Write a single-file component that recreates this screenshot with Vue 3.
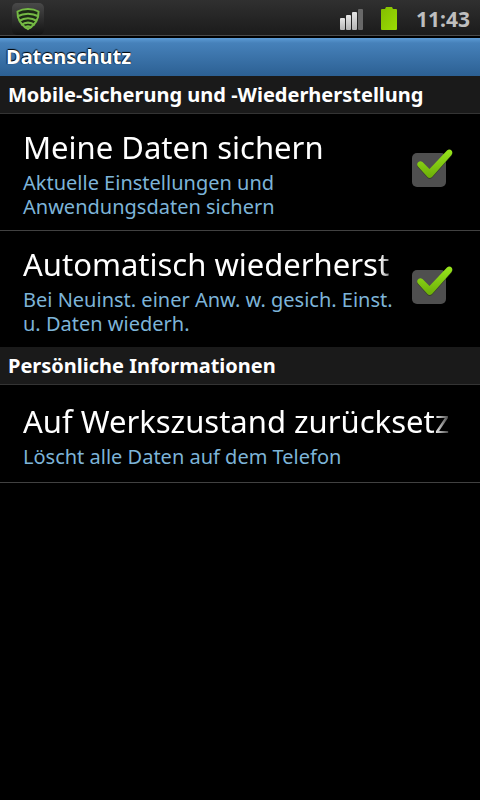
<script setup>
import { reactive } from 'vue'

const sections = reactive([
  {
    heading: 'Mobile-Sicherung und -Wiederherstellung',
    items: [
      {
        id: 'backup',
        title: 'Meine Daten sichern',
        summary: 'Aktuelle Einstellungen und Anwendungsdaten sichern',
        toggle: true,
        checked: true,
      },
      {
        id: 'restore',
        title: 'Automatisch wiederherst',
        summary: 'Bei Neuinst. einer Anw. w. gesich. Einst. u. Daten wiederh.',
        toggle: true,
        checked: true,
      },
    ],
  },
  {
    heading: 'Persönliche Informationen',
    items: [
      {
        id: 'reset',
        title: 'Auf Werkszustand zurücksetz',
        summary: 'Löscht alle Daten auf dem Telefon',
        toggle: false,
      },
    ],
  },
])
</script>

<template>
  <div class="screen">
    <header class="status">
      <svg class="app-icon" viewBox="0 0 32 32" aria-hidden="true">
        <defs>
          <linearGradient id="tile" x1="0" y1="0" x2="0" y2="1">
            <stop offset="0" stop-color="#494949" />
            <stop offset="1" stop-color="#131313" />
          </linearGradient>
          <clipPath id="shield">
            <path d="M16 5 Q22 5 27.500 8 Q28 21 16 27.500 Q4 21 4.500 8 Q10 5 16 5Z" />
          </clipPath>
        </defs>
        <rect width="32" height="32" rx="5" fill="url(#tile)" />
        <path d="M16 6 Q22 6 26.500 8.500 Q27 20 16 26 Q5 20 5.500 8.500 Q10 6 16 6Z" fill="#1d2a16" stroke="#74b944" stroke-width="2" />
        <g clip-path="url(#shield)" fill="none" stroke="#74b944" stroke-width="2.200">
          <path d="M5 13.500 Q16 8 27 13.500" />
          <path d="M7 18 Q16 12.500 25 18" />
          <path d="M9 22.300 Q16 17 23 22.300" />
          <path d="M12 25.500 Q16 21.500 20 25.500" />
        </g>
      </svg>
      <div class="indicators">
        <svg class="signal" viewBox="0 0 24 22" aria-hidden="true">
          <defs>
            <linearGradient id="bars" x1="0" y1="0" x2="0" y2="1">
              <stop offset="0" stop-color="#e6e6e6" />
              <stop offset="1" stop-color="#b4b4b4" />
            </linearGradient>
          </defs>
          <g fill="url(#bars)">
            <rect x="0" y="10" width="5" height="12" rx="1" />
            <rect x="6" y="7" width="5" height="15" rx="1" />
            <rect x="12" y="4" width="5" height="18" rx="1" />
          </g>
          <rect x="18" y="1" width="5" height="21" rx="1" fill="#686868" />
        </svg>
        <svg class="battery" viewBox="0 0 18 24" aria-hidden="true">
          <defs>
            <linearGradient id="charge" x1="0" y1="0" x2="1" y2="1">
              <stop offset="0" stop-color="#83bd00" />
              <stop offset="1" stop-color="#9add04" />
            </linearGradient>
          </defs>
          <path d="M2 2 H5 L6 0 H12 L13 2 H16 Q17 2 17 3 V22 Q17 23 16 23 H2 Q1 23 1 22 V3 Q1 2 2 2Z" fill="url(#charge)" />
        </svg>
        <time class="clock">11:43</time>
      </div>
    </header>

    <h1 class="title-bar">Datenschutz</h1>

    <main>
      <section v-for="section in sections" :key="section.heading" class="section">
        <h2 class="heading">{{ section.heading }}</h2>
        <component
          :is="item.toggle ? 'label' : 'button'"
          v-for="item in section.items"
          :key="item.id"
          class="row"
        >
          <span class="text">
            <span class="name">{{ item.title }}</span>
            <span class="summary">{{ item.summary }}</span>
          </span>
          <span v-if="item.toggle" class="check">
            <input v-model="item.checked" type="checkbox" class="box" />
            <svg v-if="item.checked" class="tick" viewBox="0 0 44 44" aria-hidden="true">
              <defs>
                <linearGradient :id="'tick-' + item.id" x1="0" y1="0" x2="0" y2="1">
                  <stop offset="0" stop-color="#98e61c" />
                  <stop offset="1" stop-color="#6cae08" />
                </linearGradient>
              </defs>
              <path d="M7.500 15 Q9.500 12 12.500 14 L19.500 21 L37 2.500 Q39.500 0.500 42 3 Q43 5 41.500 7 L22 29 Q19.500 31 17.500 29 L8 18.500 Q6.500 17 7.500 15Z" fill="#2c3a18" opacity=".6" transform="translate(0 1)" />
              <path d="M7.500 15 Q9.500 12 12.500 14 L19.500 21 L37 2.500 Q39.500 0.500 42 3 Q43 5 41.500 7 L22 29 Q19.500 31 17.500 29 L8 18.500 Q6.500 17 7.500 15Z" :fill="'url(#tick-' + item.id + ')'" />
            </svg>
          </span>
        </component>
      </section>
    </main>
  </div>
</template>

<style>
body {
  background: #000;
}
</style>

<style scoped>
.screen {
  min-height: 100vh;
  background: #000;
  color: #fff;
  font-family: "Noto Sans", "Open Sans", sans-serif;
}
.status {
  display: flex;
  justify-content: space-between;
  align-items: center;
  box-sizing: border-box;
  height: 38px;
  padding: 0 10px 0 12px;
  background: linear-gradient(#303030, #1b1b1b 35px, #4a4a4a 35px, #4a4a4a 36px, #000 36px);
}
.app-icon {
  width: 32px;
  height: 32px;
}
.indicators {
  display: flex;
  align-items: center;
}
.signal {
  width: 24px;
  height: 22px;
  margin-right: 16px;
}
.battery {
  width: 18px;
  height: 24px;
  margin-right: 18px;
}
.clock {
  font-size: 21px;
  font-weight: 700;
  line-height: 38px;
  color: #bebebe;
}
.title-bar {
  box-sizing: border-box;
  height: 38px;
  margin: 0;
  padding: 0 6px;
  background: linear-gradient(#5c9bd5, #4681ba 5px, #2c6093);
  font-size: 20px;
  font-weight: 700;
  line-height: 37px;
  text-shadow: 0 -1px 1px #000, -1px 0 1px #102a44;
}
.heading {
  margin: 0;
  padding: 0 8px;
  border-bottom: 1px solid #343434;
  background: #1a1a1a;
  font-size: 20px;
  font-weight: 700;
  line-height: 37px;
}
.row {
  display: flex;
  align-items: center;
  gap: 10px;
  box-sizing: border-box;
  width: 100%;
  min-height: 98px;
  margin: 0;
  padding: 10px 26px 11px 23px;
  border: 0;
  border-bottom: 1px solid #414141;
  background: #000;
  color: #fff;
  font-family: inherit;
  text-align: left;
}
.section:not(:last-child) .row:last-child {
  border-bottom: 0;
}
.text {
  display: flex;
  flex: 1;
  flex-direction: column;
  gap: 1px;
  min-width: 0;
}
.name {
  overflow: hidden;
  font-size: 31px;
  line-height: 46px;
  white-space: nowrap;
  mask-image: linear-gradient(to left, transparent, #000 20px);
}
.summary {
  font-size: 20px;
  line-height: 24px;
  color: #7db4d8;
}
.check {
  display: grid;
  flex: none;
  align-items: center;
  padding-bottom: 4px;
}
.box,
.tick {
  grid-area: 1 / 1;
}
.box {
  width: 34px;
  height: 34px;
  margin: 0 0 0 2px;
  border-radius: 5px;
  background: #4f4f4f;
  appearance: none;
}
.tick {
  width: 44px;
  height: 44px;
  pointer-events: none;
}
</style>
